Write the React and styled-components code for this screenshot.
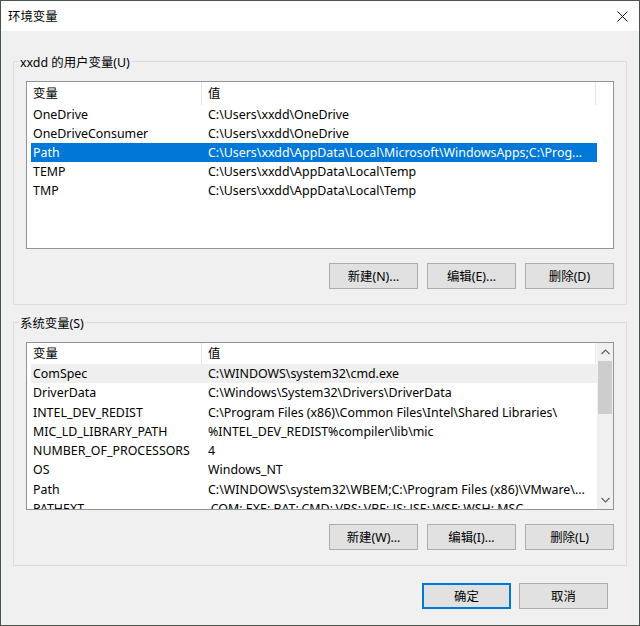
import React from 'react';
import styled, { createGlobalStyle } from 'styled-components';

const GlobalStyle = createGlobalStyle`
  html, body {
    margin: 0;
    padding: 0;
    background: #ffffff;
  }

  body {
    font-family: "Noto Sans", "Noto Sans CJK SC", sans-serif;
    font-size: 12.4px;
    color: #000000;
  }

  * {
    box-sizing: border-box;
  }
`;

const StyledWindow = styled.div`
  width: 640px;
  height: 626px;
  border: 1px solid #46564a;
  background: #f0f0f0;
  display: flex;
  flex-direction: column;
`;

const StyledTitleBar = styled.div`
  flex: none;
  height: 30px;
  padding: 0 11px 0 7px;
  background: #ffffff;
  display: flex;
  align-items: center;
  justify-content: space-between;
`;

const StyledBody = styled.div`
  flex: 1;
  padding: 0 12px;
  display: flex;
  flex-direction: column;
`;

const StyledGroup = styled.fieldset`
  margin: ${({ $top }) => $top}px 0 0;
  padding: 10px 12px 15px;
  min-width: 0;
  border: 1px solid #dcdcdc;

  legend {
    margin-left: -7px;
    padding: 4px 1px 0;
    line-height: 16px;
  }
`;

const StyledList = styled.div`
  height: 168px;
  border: 1px solid #8f939a;
  background: #ffffff;
  display: flex;
  overflow: hidden;
`;

const StyledListContent = styled.div`
  flex: 1;
  padding-left: 4px;
  overflow: hidden;
`;

const StyledRow = styled.div`
  display: grid;
  grid-template-columns: 171px 394px;
  height: ${({ $h }) => $h}px;
  line-height: ${({ $h }) => $h}px;
  white-space: nowrap;
  background: ${({ $state }) =>
    $state === 'selected' ? '#0078d7' : $state === 'hover' ? '#efefef' : 'transparent'};
  color: ${({ $state }) => ($state === 'selected' ? '#ffffff' : '#000000')};

  span {
    overflow: hidden;
    padding-left: 2px;
  }

  span + span {
    padding-left: 6px;
  }
`;

const StyledHeader = styled(StyledRow)`
  span {
    border-right: 1px solid #e5e5e5;
  }
`;

const StyledScrollbar = styled.div`
  flex: none;
  width: 16px;
  background: ${({ $blank }) => ($blank ? '#ffffff' : '#f0f0f0')};
  display: flex;
  flex-direction: column;
`;

const StyledArrow = styled.div`
  flex: none;
  height: 18px;
  display: flex;
  align-items: center;
  justify-content: center;
`;

const StyledTrack = styled.div`
  flex: 1;
`;

const StyledThumb = styled.div`
  height: 53px;
  margin: 0 1px;
  background: #cdcdcd;
`;

const StyledButtonRow = styled.div`
  margin-top: 14px;
  display: flex;
  justify-content: flex-end;
  gap: 9px;
`;

const StyledButton = styled.button`
  width: 89px;
  height: 26px;
  padding: 0;
  border: 1px solid #adadad;
  background: #e1e1e1;
  font: inherit;
  color: #000000;
  ${({ $primary }) =>
    $primary &&
    `
    border-color: #0078d7;
    box-shadow: inset 0 0 0 1px #0078d7;
  `}
`;

const StyledFooter = styled.div`
  margin-top: 17px;
  padding-right: 19px;
  display: flex;
  justify-content: flex-end;
  gap: 8px;
`;

const userVars = [
  ['OneDrive', 'C:\\Users\\xxdd\\OneDrive'],
  ['OneDriveConsumer', 'C:\\Users\\xxdd\\OneDrive'],
  ['Path', 'C:\\Users\\xxdd\\AppData\\Local\\Microsoft\\WindowsApps;C:\\Prog...', 'selected'],
  ['TEMP', 'C:\\Users\\xxdd\\AppData\\Local\\Temp'],
  ['TMP', 'C:\\Users\\xxdd\\AppData\\Local\\Temp'],
];

const systemVars = [
  ['ComSpec', 'C:\\WINDOWS\\system32\\cmd.exe', 'hover'],
  ['DriverData', 'C:\\Windows\\System32\\Drivers\\DriverData'],
  ['INTEL_DEV_REDIST', 'C:\\Program Files (x86)\\Common Files\\Intel\\Shared Libraries\\'],
  ['MIC_LD_LIBRARY_PATH', '%INTEL_DEV_REDIST%compiler\\lib\\mic'],
  ['NUMBER_OF_PROCESSORS', '4'],
  ['OS', 'Windows_NT'],
  ['Path', 'C:\\WINDOWS\\system32\\WBEM;C:\\Program Files (x86)\\VMware\\...'],
  ['PATHEXT', '.COM;.EXE;.BAT;.CMD;.VBS;.VBE;.JS;.JSE;.WSF;.WSH;.MSC'],
];

const Chevron = ({ up }) => (
  <svg width="9" height="6" viewBox="0 0 9 6">
    <polyline
      points={up ? '0.5,5 4.5,1 8.5,5' : '0.5,1 4.5,5 8.5,1'}
      fill="none"
      stroke="#606060"
      strokeWidth="1.2"
    />
  </svg>
);

const VarList = ({ rows, headerHeight, rowHeight, scroll }) => (
  <StyledList>
    <StyledListContent>
      <StyledHeader $h={headerHeight}>
        <span>变量</span>
        <span>值</span>
      </StyledHeader>
      {rows.map(([name, value, state]) => (
        <StyledRow key={name + value} $h={rowHeight} $state={state}>
          <span>{name}</span>
          <span>{value}</span>
        </StyledRow>
      ))}
    </StyledListContent>
    {scroll ? (
      <StyledScrollbar>
        <StyledArrow>
          <Chevron up />
        </StyledArrow>
        <StyledTrack>
          <StyledThumb />
        </StyledTrack>
        <StyledArrow>
          <Chevron />
        </StyledArrow>
      </StyledScrollbar>
    ) : (
      <StyledScrollbar $blank />
    )}
  </StyledList>
);

const App = () => (
  <>
    <GlobalStyle />
    <StyledWindow>
      <StyledTitleBar>
        <span>环境变量</span>
        <svg width="11" height="11" viewBox="0 0 11 11">
          <path d="M0.5 0.5 L10.5 10.5 M10.5 0.5 L0.5 10.5" stroke="#111" strokeWidth="1" />
        </svg>
      </StyledTitleBar>
      <StyledBody>
        <StyledGroup $top={20}>
          <legend>xxdd 的用户变量(U)</legend>
          <VarList rows={userVars} headerHeight={23} rowHeight={19} />
          <StyledButtonRow>
            <StyledButton>新建(N)...</StyledButton>
            <StyledButton>编辑(E)...</StyledButton>
            <StyledButton>删除(D)</StyledButton>
          </StyledButtonRow>
        </StyledGroup>
        <StyledGroup $top={7}>
          <legend>系统变量(S)</legend>
          <VarList rows={systemVars} headerHeight={21} rowHeight={19.3} scroll />
          <StyledButtonRow>
            <StyledButton>新建(W)...</StyledButton>
            <StyledButton>编辑(I)...</StyledButton>
            <StyledButton>删除(L)</StyledButton>
          </StyledButtonRow>
        </StyledGroup>
        <StyledFooter>
          <StyledButton $primary>确定</StyledButton>
          <StyledButton>取消</StyledButton>
        </StyledFooter>
      </StyledBody>
    </StyledWindow>
  </>
);

export default App;
